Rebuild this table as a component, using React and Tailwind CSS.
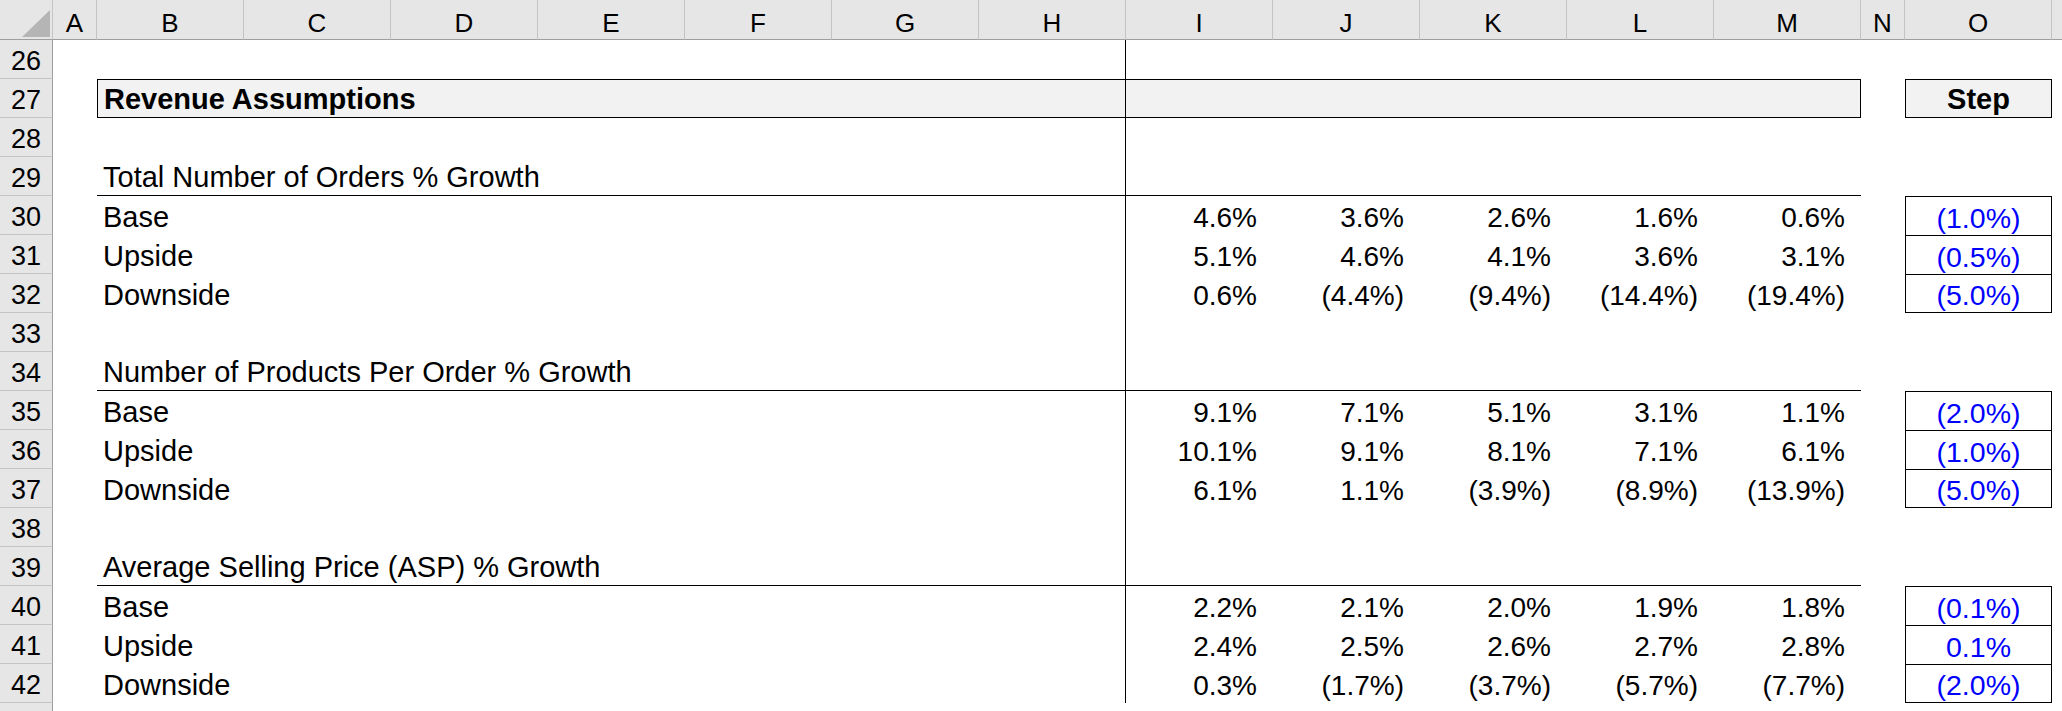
import React from "react";

const LETTERS = ["A", "B", "C", "D", "E", "F", "G", "H", "I", "J", "K", "L", "M", "N", "O"];

const SECTIONS = [
  {
    title: "Total Number of Orders % Growth",
    rows: [
      ["Base", ["4.6%", "3.6%", "2.6%", "1.6%", "0.6%"], "(1.0%)"],
      ["Upside", ["5.1%", "4.6%", "4.1%", "3.6%", "3.1%"], "(0.5%)"],
      ["Downside", ["0.6%", "(4.4%)", "(9.4%)", "(14.4%)", "(19.4%)"], "(5.0%)"],
    ],
  },
  {
    title: "Number of Products Per Order % Growth",
    rows: [
      ["Base", ["9.1%", "7.1%", "5.1%", "3.1%", "1.1%"], "(2.0%)"],
      ["Upside", ["10.1%", "9.1%", "8.1%", "7.1%", "6.1%"], "(1.0%)"],
      ["Downside", ["6.1%", "1.1%", "(3.9%)", "(8.9%)", "(13.9%)"], "(5.0%)"],
    ],
  },
  {
    title: "Average Selling Price (ASP) % Growth",
    rows: [
      ["Base", ["2.2%", "2.1%", "2.0%", "1.9%", "1.8%"], "(0.1%)"],
      ["Upside", ["2.4%", "2.5%", "2.6%", "2.7%", "2.8%"], "0.1%"],
      ["Downside", ["0.3%", "(1.7%)", "(3.7%)", "(5.7%)", "(7.7%)"], "(2.0%)"],
    ],
  },
];

function RowHead({ n }) {
  return (
    <div className="flex items-end justify-center bg-[#e6e6e6] border-b border-r border-b-[#c4c4c4] border-r-[#9e9e9e] pb-[3px] text-[27px] leading-none text-black">
      {n}
    </div>
  );
}

const base = "flex items-end leading-none pb-[3px] text-black whitespace-nowrap";
const lbl = `${base} text-[29px]`;
const bold = `${base} text-[29px] font-bold`;
const num = `${base} text-[28px]`;

function EmptyRow({ n }) {
  return (
    <>
      <RowHead n={n} />
      <div />
      <div className="col-span-7 border-r border-black" />
      <div className="col-span-5" />
      <div />
      <div />
      <div />
    </>
  );
}

function TitleRow({ n, title }) {
  return (
    <>
      <RowHead n={n} />
      <div />
      <div className={`col-span-7 border-b border-r border-black pl-[6px] ${lbl}`}>{title}</div>
      <div className="col-span-5 border-b border-black" />
      <div />
      <div />
      <div />
    </>
  );
}

function DataRow({ n, label, values, step, last }) {
  return (
    <>
      <RowHead n={n} />
      <div />
      <div className={`col-span-7 border-r border-black pl-[6px] ${lbl}`}>{label}</div>
      {values.map((v, i) => (
        <div key={i} className={`justify-end pr-[16px] ${num}`}>
          {v}
        </div>
      ))}
      <div />
      <div
        className={`flex items-end justify-center leading-none pb-[3px] text-[28.5px] text-[#0000ff] border-x border-t border-black ${
          last ? "border-b" : ""
        }`}
      >
        {step}
      </div>
      <div />
    </>
  );
}

export default function App() {
  const rows = [];
  rows.push(<EmptyRow key={26} n={26} />);
  rows.push(
    <React.Fragment key={27}>
      <RowHead n={27} />
      <div />
      <div className={`col-span-7 border border-black bg-[#f2f2f2] pl-[6px] ${bold}`}>
        Revenue Assumptions
      </div>
      <div className="col-span-5 border-y border-r border-black bg-[#f2f2f2]" />
      <div />
      <div className={`justify-center border border-black bg-[#f2f2f2] ${bold}`}>Step</div>
      <div />
    </React.Fragment>
  );
  rows.push(<EmptyRow key={28} n={28} />);
  let n = 29;
  SECTIONS.forEach((s, si) => {
    rows.push(<TitleRow key={n} n={n} title={s.title} />);
    n++;
    s.rows.forEach((r, ri) => {
      rows.push(
        <DataRow key={n} n={n} label={r[0]} values={r[1]} step={r[2]} last={ri === s.rows.length - 1} />
      );
      n++;
    });
    if (si < SECTIONS.length - 1) {
      rows.push(<EmptyRow key={n} n={n} />);
      n++;
    }
  });

  return (
    <div className="h-[711px] w-[2062px] overflow-hidden bg-white font-['Liberation_Sans',Arial,sans-serif]">
      <div className="grid grid-cols-[53px_44px_repeat(12,147px)_44px_147px_1fr] grid-rows-[40px_repeat(18,39px)]">
        <div className="relative bg-[#e6e6e6] border-b border-r border-b-[#9e9e9e] border-r-[#c4c4c4]">
          <svg className="absolute left-0 top-0" width="53" height="40" viewBox="0 0 53 40">
            <polygon points="50,10 50,37 22,37" fill="#b5b5b5" />
          </svg>
        </div>
        {LETTERS.map((l) => (
          <div
            key={l}
            className="flex items-end justify-center bg-[#e6e6e6] border-b border-r border-b-[#9e9e9e] border-r-[#c4c4c4] pb-[3px] text-[26px] leading-none text-black"
          >
            {l}
          </div>
        ))}
        <div className="bg-[#e6e6e6] border-b border-b-[#9e9e9e]" />

        {rows}

        <div className="bg-[#e6e6e6] border-r border-r-[#9e9e9e]" />
      </div>
    </div>
  );
}
